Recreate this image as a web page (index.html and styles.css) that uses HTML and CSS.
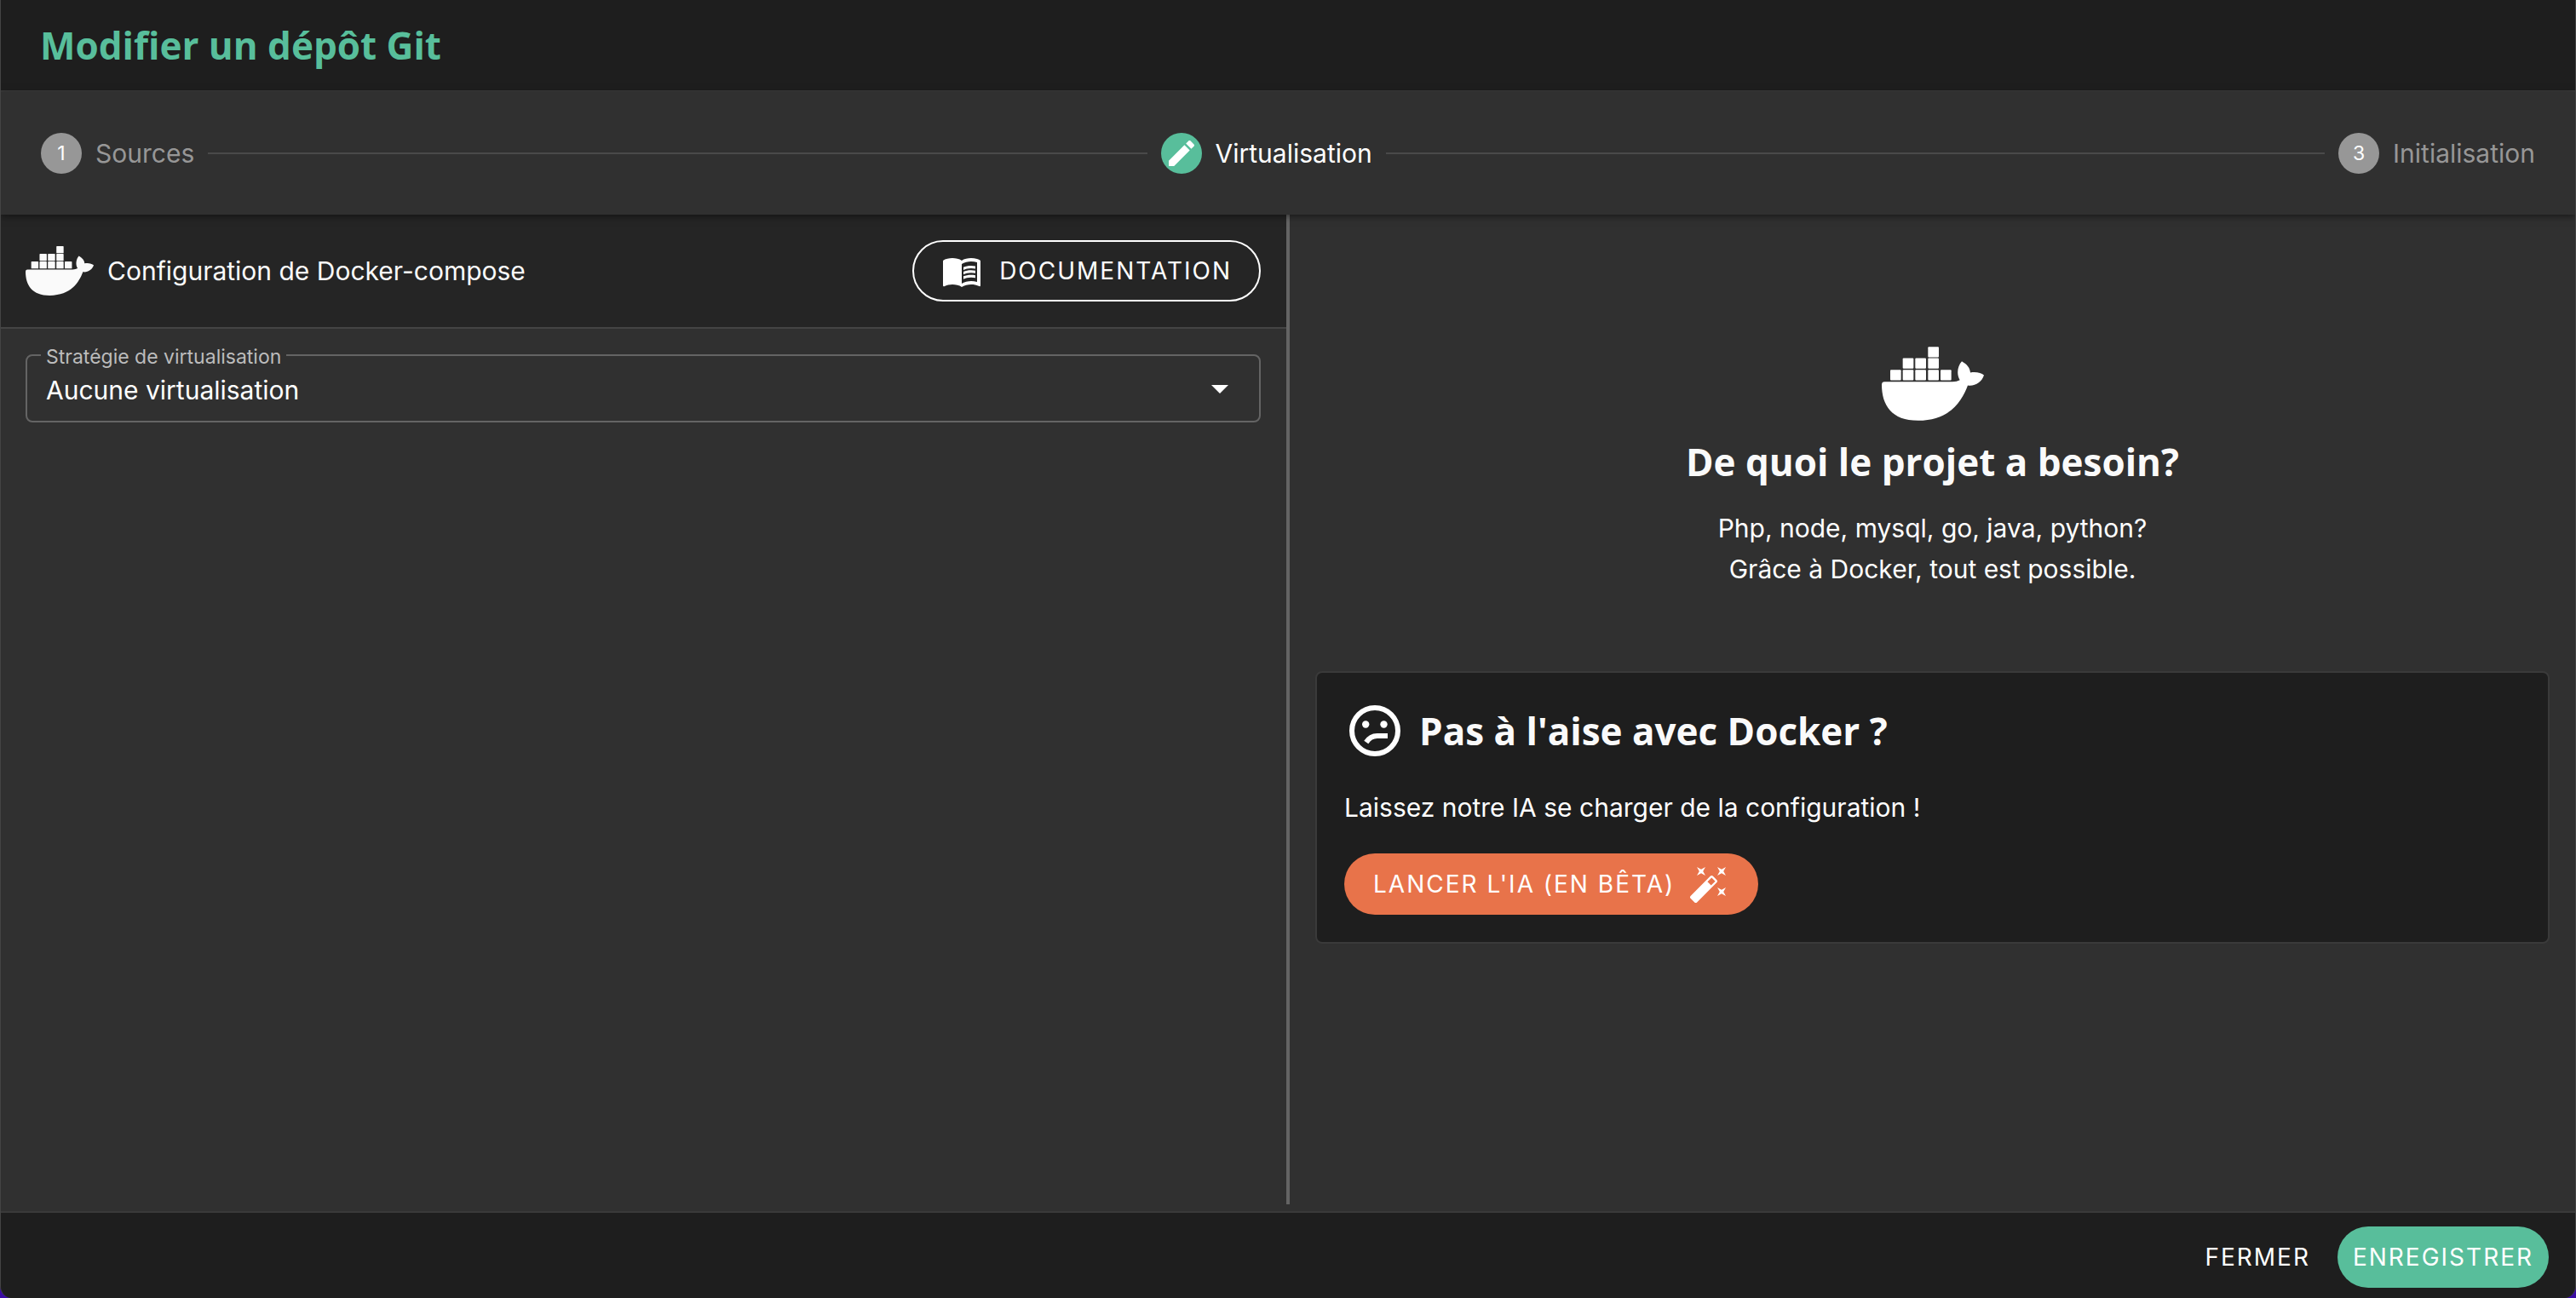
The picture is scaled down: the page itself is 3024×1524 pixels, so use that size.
FILE: index.html
```html
<!DOCTYPE html>
<html lang="fr">
<head>
<meta charset="utf-8">
<meta name="viewport" content="width=device-width, initial-scale=1">
<title>Modifier un dépôt Git</title>
<link rel="stylesheet" href="styles.css">
</head>
<body>
<svg class="sprite" aria-hidden="true">
  <symbol id="docker" viewBox="27 20 360 260">
    <g fill="currentColor">
      <rect x="190" y="20" width="38" height="37" rx="3"/>
      <rect x="101" y="60" width="38" height="37" rx="3"/>
      <rect x="145" y="60" width="38" height="37" rx="3"/>
      <rect x="190" y="60" width="38" height="37" rx="3"/>
      <rect x="57" y="101" width="38" height="37" rx="3"/>
      <rect x="101" y="101" width="38" height="37" rx="3"/>
      <rect x="145" y="101" width="38" height="37" rx="3"/>
      <rect x="190" y="101" width="38" height="37" rx="3"/>
      <rect x="234" y="101" width="38" height="37" rx="3"/>
      <path d="M37 143H276Q292 143 302 137C290 118 293 88 309 71C328 82 338 94 339 111C358 107 378 112 387 120C380 144 355 160 330 156C310 210 268 280 155 280C62 280 27 226 27 153Q27 143 37 143Z"/>
    </g>
  </symbol>
</svg>
<div class="dialog">
  <header class="dialog-header"><h1 class="title">Modifier un dépôt Git</h1></header>

  <ol class="stepper">
    <li class="step"><span class="step-badge">1</span><span>Sources</span></li>
    <li class="step-line" role="presentation"></li>
    <li class="step step-active" aria-current="step">
      <span class="step-badge"><svg class="icon-pencil" viewBox="0 0 24 24" aria-hidden="true"><path fill="currentColor" d="M20.71 7.04c.39-.39.39-1.04 0-1.41l-2.34-2.34c-.37-.39-1.02-.39-1.41 0l-1.84 1.83 3.75 3.75M3 17.25V21h3.75L17.81 9.93l-3.75-3.75L3 17.25z"/></svg></span><span>Virtualisation</span>
    </li>
    <li class="step-line" role="presentation"></li>
    <li class="step"><span class="step-badge">3</span><span>Initialisation</span></li>
  </ol>

  <main class="panes">
    <section class="pane">
      <div class="toolbar">
        <svg class="docker-small" aria-hidden="true"><use href="#docker"/></svg>
        <h2 class="toolbar-title">Configuration de Docker-compose</h2>
        <button type="button" class="btn btn-outlined">
          <svg class="icon" viewBox="0 0 24 24" aria-hidden="true"><path fill="currentColor" d="M21 5c-1.11-.35-2.33-.5-3.5-.5-1.95 0-4.05.4-5.5 1.5-1.45-1.1-3.55-1.5-5.5-1.5S2.45 4.9 1 6v14.650c0 .25.25.5.5.5.1 0 .15-.05.25-.05C3.1 20.450 5.050 20 6.500 20c1.950 0 4.050.4 5.500 1.500 1.350-.85 3.800-1.500 5.500-1.500 1.650 0 3.350.3 4.750 1.050.1.050.15.050.25.050.25 0 .5-.25.5-.5V6c-.6-.45-1.250-.75-2-1zm0 13.500c-1.100-.35-2.300-.5-3.500-.5-1.700 0-4.150.65-5.500 1.500V8c1.350-.85 3.800-1.500 5.500-1.500 1.200 0 2.400.15 3.500.5v11.500z"/><path fill="currentColor" d="M17.500 10.500c.88 0 1.730.09 2.500.26V9.240c-.79-.15-1.640-.24-2.500-.24-1.700 0-3.240.29-4.500.83v1.660c1.130-.64 2.700-.99 4.500-.99zM13 12.490v1.660c1.130-.64 2.700-.99 4.500-.99.88 0 1.730.09 2.500.26V11.900c-.79-.15-1.640-.24-2.500-.24-1.700 0-3.240.3-4.500.83zM17.500 14.330c-1.700 0-3.240.29-4.500.83v1.660c1.130-.64 2.700-.99 4.500-.99.88 0 1.730.09 2.500.26v-1.520c-.79-.16-1.640-.24-2.500-.24z"/></svg>
          DOCUMENTATION
        </button>
      </div>
      <div class="field">
        <label class="field-label" for="strategy">Stratégie de virtualisation</label>
        <select class="field-select" id="strategy"><option>Aucune virtualisation</option></select>
        <svg class="field-arrow" viewBox="0 0 20 10" aria-hidden="true"><path fill="currentColor" d="M0 0h20L10 10z"/></svg>
      </div>
    </section>

    <div class="divider" role="separator" aria-orientation="vertical"></div>

    <section class="pane pane-help">
      <div class="intro">
        <svg class="docker-large" aria-hidden="true"><use href="#docker"/></svg>
        <h2 class="title">De quoi le projet a besoin?</h2>
        <p>Php, node, mysql, go, java, python?<br>Grâce à Docker, tout est possible.</p>
      </div>
      <div class="card">
        <div class="card-head">
          <svg class="icon-face" viewBox="0 0 24 24" aria-hidden="true">
            <circle cx="12" cy="12" r="9" fill="none" stroke="currentColor" stroke-width="2"/>
            <circle cx="8.400" cy="9.500" r="1.400" fill="currentColor"/>
            <circle cx="15.500" cy="9.500" r="1.400" fill="currentColor"/>
            <path d="M8.600 16.500C9.700 14.800 11.100 14 12.900 14H17" fill="none" stroke="currentColor" stroke-width="2"/>
          </svg>
          <h2 class="title">Pas à l'aise avec Docker ?</h2>
        </div>
        <p>Laissez notre IA se charger de la configuration !</p>
        <button type="button" class="btn btn-accent">
          LANCER L'IA (EN BÊTA)
          <svg class="icon" viewBox="0 0 24 24" aria-hidden="true"><path fill="currentColor" d="M7.500 5.600L5 7l1.400-2.500L5 2l2.500 1.400L10 2 8.600 4.500 10 7 7.500 5.600m12 9.800L22 14l-1.400 2.500L22 19l-2.500-1.400L17 19l1.400-2.500L17 14l2.500 1.400M22 2l-1.400 2.500L22 7l-2.500-1.400L17 7l1.400-2.500L17 2l2.500 1.400L22 2m-8.660 10.780l2.440-2.440-2.120-2.120-2.440 2.440 2.120 2.120m1.030-5.490l2.340 2.340c.39.37.39 1.020 0 1.410L5.040 22.710c-.39.39-1.040.39-1.410 0l-2.340-2.340c-.39-.37-.39-1.020 0-1.410L12.960 7.290c.39-.39 1.040-.39 1.410 0z"/></svg>
        </button>
      </div>
    </section>
  </main>

  <footer class="dialog-footer">
    <button type="button" class="btn btn-text">FERMER</button>
    <button type="button" class="btn btn-primary">ENREGISTRER</button>
  </footer>
</div>
</body>
</html>
```
FILE: styles.css
```css
:root {
  --surface: #303030;
  --dark: #1e1e1e;
  --line: #3a3a3a;
  --muted: #979797;
  --outline: #646464;
  --green: #58be9b;
  --orange: #e8734a;
}

* { box-sizing: border-box; }

body {
  margin: 0;
  background: #3a0ca3;
  color: #fff;
  font: 30px/48px Inter, "Liberation Sans", sans-serif;
}

h1, h2, p, ol { margin: 0; padding: 0; font-weight: 400; }

svg { display: block; flex: none; }

.sprite { position: absolute; width: 0; height: 0; }

.dialog {
  display: flex;
  flex-direction: column;
  min-height: 100vh;
  overflow: hidden;
  background: var(--surface);
  border: solid #444;
  border-width: 0 1px;
  border-radius: 0 0 14px 14px;
}

.title {
  font: bold 44px/60px "Open Sans", "Noto Sans", sans-serif;
  color: #fafafa;
}

.dialog-header {
  padding: 23px 46px;
  background: var(--dark);
  border-bottom: 2px solid var(--line);
}

.dialog-header .title { color: var(--green); }

/* Stepper */
.stepper {
  position: relative;
  z-index: 1;
  display: flex;
  align-items: center;
  gap: 16px;
  height: 144px;
  padding: 0 47px;
  list-style: none;
  background: var(--surface);
  box-shadow: 0 2px 8px rgba(0, 0, 0, .5);
}

.step {
  display: flex;
  align-items: center;
  gap: 16px;
  color: var(--muted);
}

.step-active { color: #fff; }

.step-badge {
  display: flex;
  align-items: center;
  justify-content: center;
  width: 48px;
  height: 48px;
  border-radius: 50%;
  background: var(--muted);
  color: #fff;
  font-size: 23px;
}

.step-active .step-badge { background: var(--green); }

.icon-pencil { width: 40px; height: 40px; }

.step-line { flex: 1; height: 2px; background: #4a4a4a; }

/* Panes */
.panes {
  flex: 1;
  display: grid;
  grid-template-columns: minmax(0, 1fr) 4px minmax(0, 1fr);
  padding-bottom: 8px;
}

.divider { background: var(--outline); }

.pane-help { padding: 0 30px; }

.toolbar {
  display: flex;
  align-items: center;
  gap: 16px;
  height: 134px;
  padding: 0 30px 0 29px;
  background: #252525;
  border-bottom: 2px solid #444;
}

.toolbar-title { flex: 1; font-size: 30px; color: #fafafa; }

.docker-small { width: 80px; height: 58px; color: #fafafa; }

.docker-large { width: 120px; height: 87px; }

/* Buttons */
.btn {
  display: inline-flex;
  align-items: center;
  height: 72px;
  padding: 0 18px;
  border: 0;
  border-radius: 36px;
  background: none;
  color: #fff;
  font: 28px/40px Inter, "Liberation Sans", sans-serif;
  letter-spacing: 2px;
  white-space: nowrap;
  cursor: pointer;
}

.btn-outlined { gap: 20px; padding: 0 32px; border: 2px solid #fff; }
.btn-accent { gap: 16px; padding: 0 34px; background: var(--orange); }
.btn-primary { background: var(--green); }

.icon { width: 48px; height: 48px; }

/* Select with its label set into the border */
.field { position: relative; margin: 30px 30px 30px 29px; }

.field-label {
  position: absolute;
  top: -13px;
  left: 18px;
  padding: 0 6px;
  background: var(--surface);
  color: #bcbcbc;
  font-size: 23px;
  line-height: 32px;
}

.field-select {
  display: block;
  width: 100%;
  height: 80px;
  padding: 4px 80px 0 22px;
  appearance: none;
  border: 2px solid var(--outline);
  border-radius: 8px;
  background: transparent;
  color: #fff;
  font: inherit;
}

.field-arrow {
  position: absolute;
  top: 36px;
  right: 38px;
  width: 20px;
  height: 10px;
  pointer-events: none;
}

/* Help column */
.intro {
  display: flex;
  flex-direction: column;
  align-items: center;
  padding: 155px 0 96px;
  text-align: center;
}

.intro .title { margin: 18px 0 24px; }

.card {
  padding: 32px;
  border: 2px solid var(--line);
  border-radius: 8px;
  background: var(--dark);
}

.card-head { display: flex; align-items: center; gap: 16px; }

.card p { margin: 30px 0; }

.icon-face { width: 72px; height: 72px; }

.dialog-footer {
  display: flex;
  justify-content: flex-end;
  gap: 14px;
  padding: 16px 31px 12px;
  background: var(--dark);
  border-top: 2px solid var(--line);
}
```
